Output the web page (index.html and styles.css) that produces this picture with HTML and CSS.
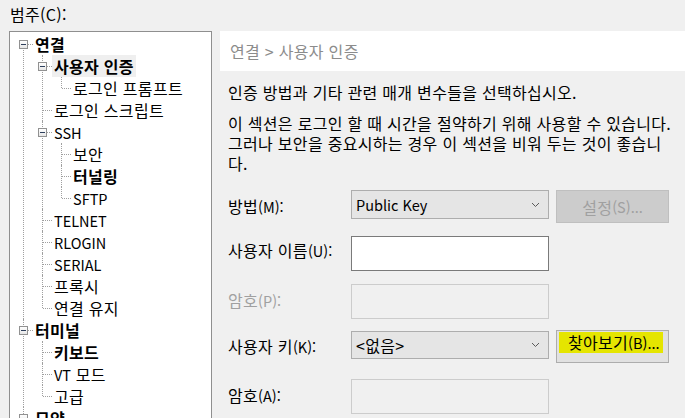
FILE: index.html
```html
<!DOCTYPE html>
<html lang="ko">
<head>
<meta charset="utf-8">
<link rel="stylesheet" href="styles.css">
</head>
<body>
<div class="page">
  <div class="cat-label">범주(C):</div>
  <div class="main">
    <div class="tree">
      <ul class="level root">
        <li class="first">
          <div class="row"><span class="exp"></span><span class="lbl b">연결</span></div>
          <ul class="level">
            <li>
              <div class="row"><span class="exp"></span><span class="lbl b sel">사용자 인증</span></div>
              <ul class="level">
                <li class="last"><div class="row"><span class="lbl">로그인 프롬프트</span></div></li>
              </ul>
            </li>
            <li><div class="row"><span class="lbl">로그인 스크립트</span></div></li>
            <li>
              <div class="row"><span class="exp"></span><span class="lbl lat">SSH</span></div>
              <ul class="level">
                <li><div class="row"><span class="lbl">보안</span></div></li>
                <li><div class="row"><span class="lbl b">터널링</span></div></li>
                <li class="last"><div class="row"><span class="lbl lat">SFTP</span></div></li>
              </ul>
            </li>
            <li><div class="row"><span class="lbl lat">TELNET</span></div></li>
            <li><div class="row"><span class="lbl lat">RLOGIN</span></div></li>
            <li><div class="row"><span class="lbl lat">SERIAL</span></div></li>
            <li><div class="row"><span class="lbl">프록시</span></div></li>
            <li class="last"><div class="row"><span class="lbl">연결 유지</span></div></li>
          </ul>
        </li>
        <li>
          <div class="row"><span class="exp"></span><span class="lbl b">터미널</span></div>
          <ul class="level">
            <li><div class="row"><span class="lbl b">키보드</span></div></li>
            <li><div class="row"><span class="lbl"><span class="lat">VT</span> 모드</span></div></li>
            <li class="last"><div class="row"><span class="lbl">고급</span></div></li>
          </ul>
        </li>
        <li class="last">
          <div class="row"><span class="exp plus"></span><span class="lbl b">모양</span></div>
        </li>
      </ul>
    </div>

    <div class="panel">
      <div class="crumb">연결 &gt; 사용자 인증</div>
      <p class="desc">인증 방법과 기타 관련 매개 변수들을 선택하십시오.</p>
      <p class="desc desc2">이 섹션은 로그인 할 때 시간을 절약하기 위해 사용할 수 있습니다.<br>그러나 보안을 중요시하는 경우 이 섹션을 비워 두는 것이 좋습니<br>다.</p>

      <div class="form">
        <div class="frow r1">
          <label class="flabel">방법<span class="lat">(M):</span></label>
          <div class="select"><span class="lat">Public Key</span><svg class="chev" width="9" height="6" viewBox="0 0 9 6"><polyline points="1,1 4.5,4.5 8,1" fill="none" stroke="#5a5a5a" stroke-width="1"/></svg></div>
          <div class="btn disabled">설정<span class="lat">(S)...</span></div>
        </div>
        <div class="frow r2">
          <label class="flabel">사용자 이름<span class="lat">(U):</span></label>
          <div class="input"></div>
        </div>
        <div class="frow r3">
          <label class="flabel dim">암호<span class="lat">(P):</span></label>
          <div class="input off"></div>
        </div>
        <div class="frow r4">
          <label class="flabel">사용자 키<span class="lat">(K):</span></label>
          <div class="select"><span>&lt;없음&gt;</span><svg class="chev" width="9" height="6" viewBox="0 0 9 6"><polyline points="1,1 4.5,4.5 8,1" fill="none" stroke="#5a5a5a" stroke-width="1"/></svg></div>
          <div class="btn browse"><span class="hl">찾아보기<span class="lat">(B)...</span></span></div>
        </div>
        <div class="frow r5">
          <label class="flabel">암호<span class="lat">(A):</span></label>
          <div class="input off"></div>
        </div>
      </div>
    </div>
  </div>
</div>
</body>
</html>
```

FILE: styles.css
```css
* { box-sizing: border-box; }

html, body {
  margin: 0;
  height: 418px;
  overflow: hidden;
}

body {
  background: #f0f0f0;
  font-family: "Noto Sans CJK KR", "Noto Sans", sans-serif;
  font-size: 16px;
  letter-spacing: 0.3px;
  color: #000;
}

.lat {
  font-size: 14.5px;
  letter-spacing: 0;
}

.page {
  padding: 4px 0 0 9px;
}

.cat-label {
  height: 27px;
  line-height: 20px;
  padding-left: 1px;
}

.main {
  display: grid;
  grid-template-columns: 203px 465px;
  column-gap: 8px;
  align-items: start;
}

/* ---------- tree ---------- */
.tree {
  background: #fff;
  border: 1px solid #8f8f8f;
  height: 420px;
  padding-top: 1px;
}

.level {
  list-style: none;
  margin: 0;
  padding: 0;
}

.level .level {
  padding-left: 19px;
}

.level li {
  position: relative;
}

/* vertical guide */
.level li::before {
  content: "";
  position: absolute;
  left: 13px;
  top: 0;
  bottom: 0;
  border-left: 1px dotted #a0a0a0;
}

.level li.last::before {
  bottom: auto;
  height: 11px;
}

.root > li.first::before {
  top: 11px;
}

.row {
  position: relative;
  height: 22px;
  line-height: 22px;
  padding-left: 23px;
  white-space: nowrap;
}

/* horizontal guide */
.row::before {
  content: "";
  position: absolute;
  left: 14px;
  top: 11px;
  width: 9px;
  border-top: 1px dotted #a0a0a0;
}

.exp {
  position: absolute;
  left: 9px;
  top: 7px;
  width: 9px;
  height: 9px;
  border: 1px solid #919191;
  background: linear-gradient(#ffffff, #e6e6e6);
  z-index: 1;
}

.exp::after {
  content: "";
  position: absolute;
  left: 1px;
  top: 3px;
  width: 5px;
  height: 1px;
  background: #2e3f5c;
}

.lbl {
  display: inline-block;
  padding: 0 2px;
  height: 22px;
}

.lbl.b { font-weight: 700; }
.lbl.sel { background: #efefef; }

/* ---------- right panel ---------- */
.panel {
  white-space: nowrap;
}

.crumb {
  height: 40px;
  line-height: 40px;
  background: #fff;
  padding-left: 10px;
  color: #8c8c8c;
}

.desc {
  margin: 11px 0 0;
  padding-left: 8px;
  line-height: 20px;
}

.form {
  padding-left: 8px;
  margin-top: 17px;
}

.frow {
  display: grid;
  grid-template-columns: 116px 198px 113px;
  column-gap: 7px;
  align-items: start;
}

.r1 { height: 33px; }
.r2 { height: 35px; margin-top: 13px; }
.r3 { height: 35px; margin-top: 13px; }
.r4 { height: 33px; margin-top: 11px; }
.r5 { height: 35px; margin-top: 16px; }

.flabel {
  line-height: 20px;
}

.r1 .flabel { margin-top: 6px; }
.r2 .flabel { margin-top: 4px; }
.r3 .flabel { margin-top: 6px; }
.r4 .flabel { margin-top: 6px; }
.r5 .flabel { margin-top: 6px; }

.flabel.dim { color: #a0a0a0; }

.select {
  height: 29px;
  border: 1px solid #adadad;
  background: #e5e5e5;
  display: flex;
  align-items: center;
  justify-content: space-between;
  padding: 0 8px 0 4px;
}

.r4 .select { margin-top: 1px; height: 28px; }

.chev { display: block; }

.input {
  height: 35px;
  border: 1px solid #7a7a7a;
  background: #fff;
}

.input.off {
  border-color: #cccccc;
  background: #f0f0f0;
}

.btn {
  height: 33px;
  border: 1px solid #adadad;
  background: #e1e1e1;
  display: flex;
  align-items: center;
  justify-content: center;
}

.btn.disabled {
  background: #cccccc;
  border-color: #bfbfbf;
  color: #a0a0a0;
}

.btn.browse {
  align-items: flex-start;
  justify-content: flex-start;
  padding: 1px 0 0 2px;
}

.hl {
  background: #e5e500;
  line-height: 21px;
  height: 21px;
  padding: 0 3px 0 9px;
}
```
